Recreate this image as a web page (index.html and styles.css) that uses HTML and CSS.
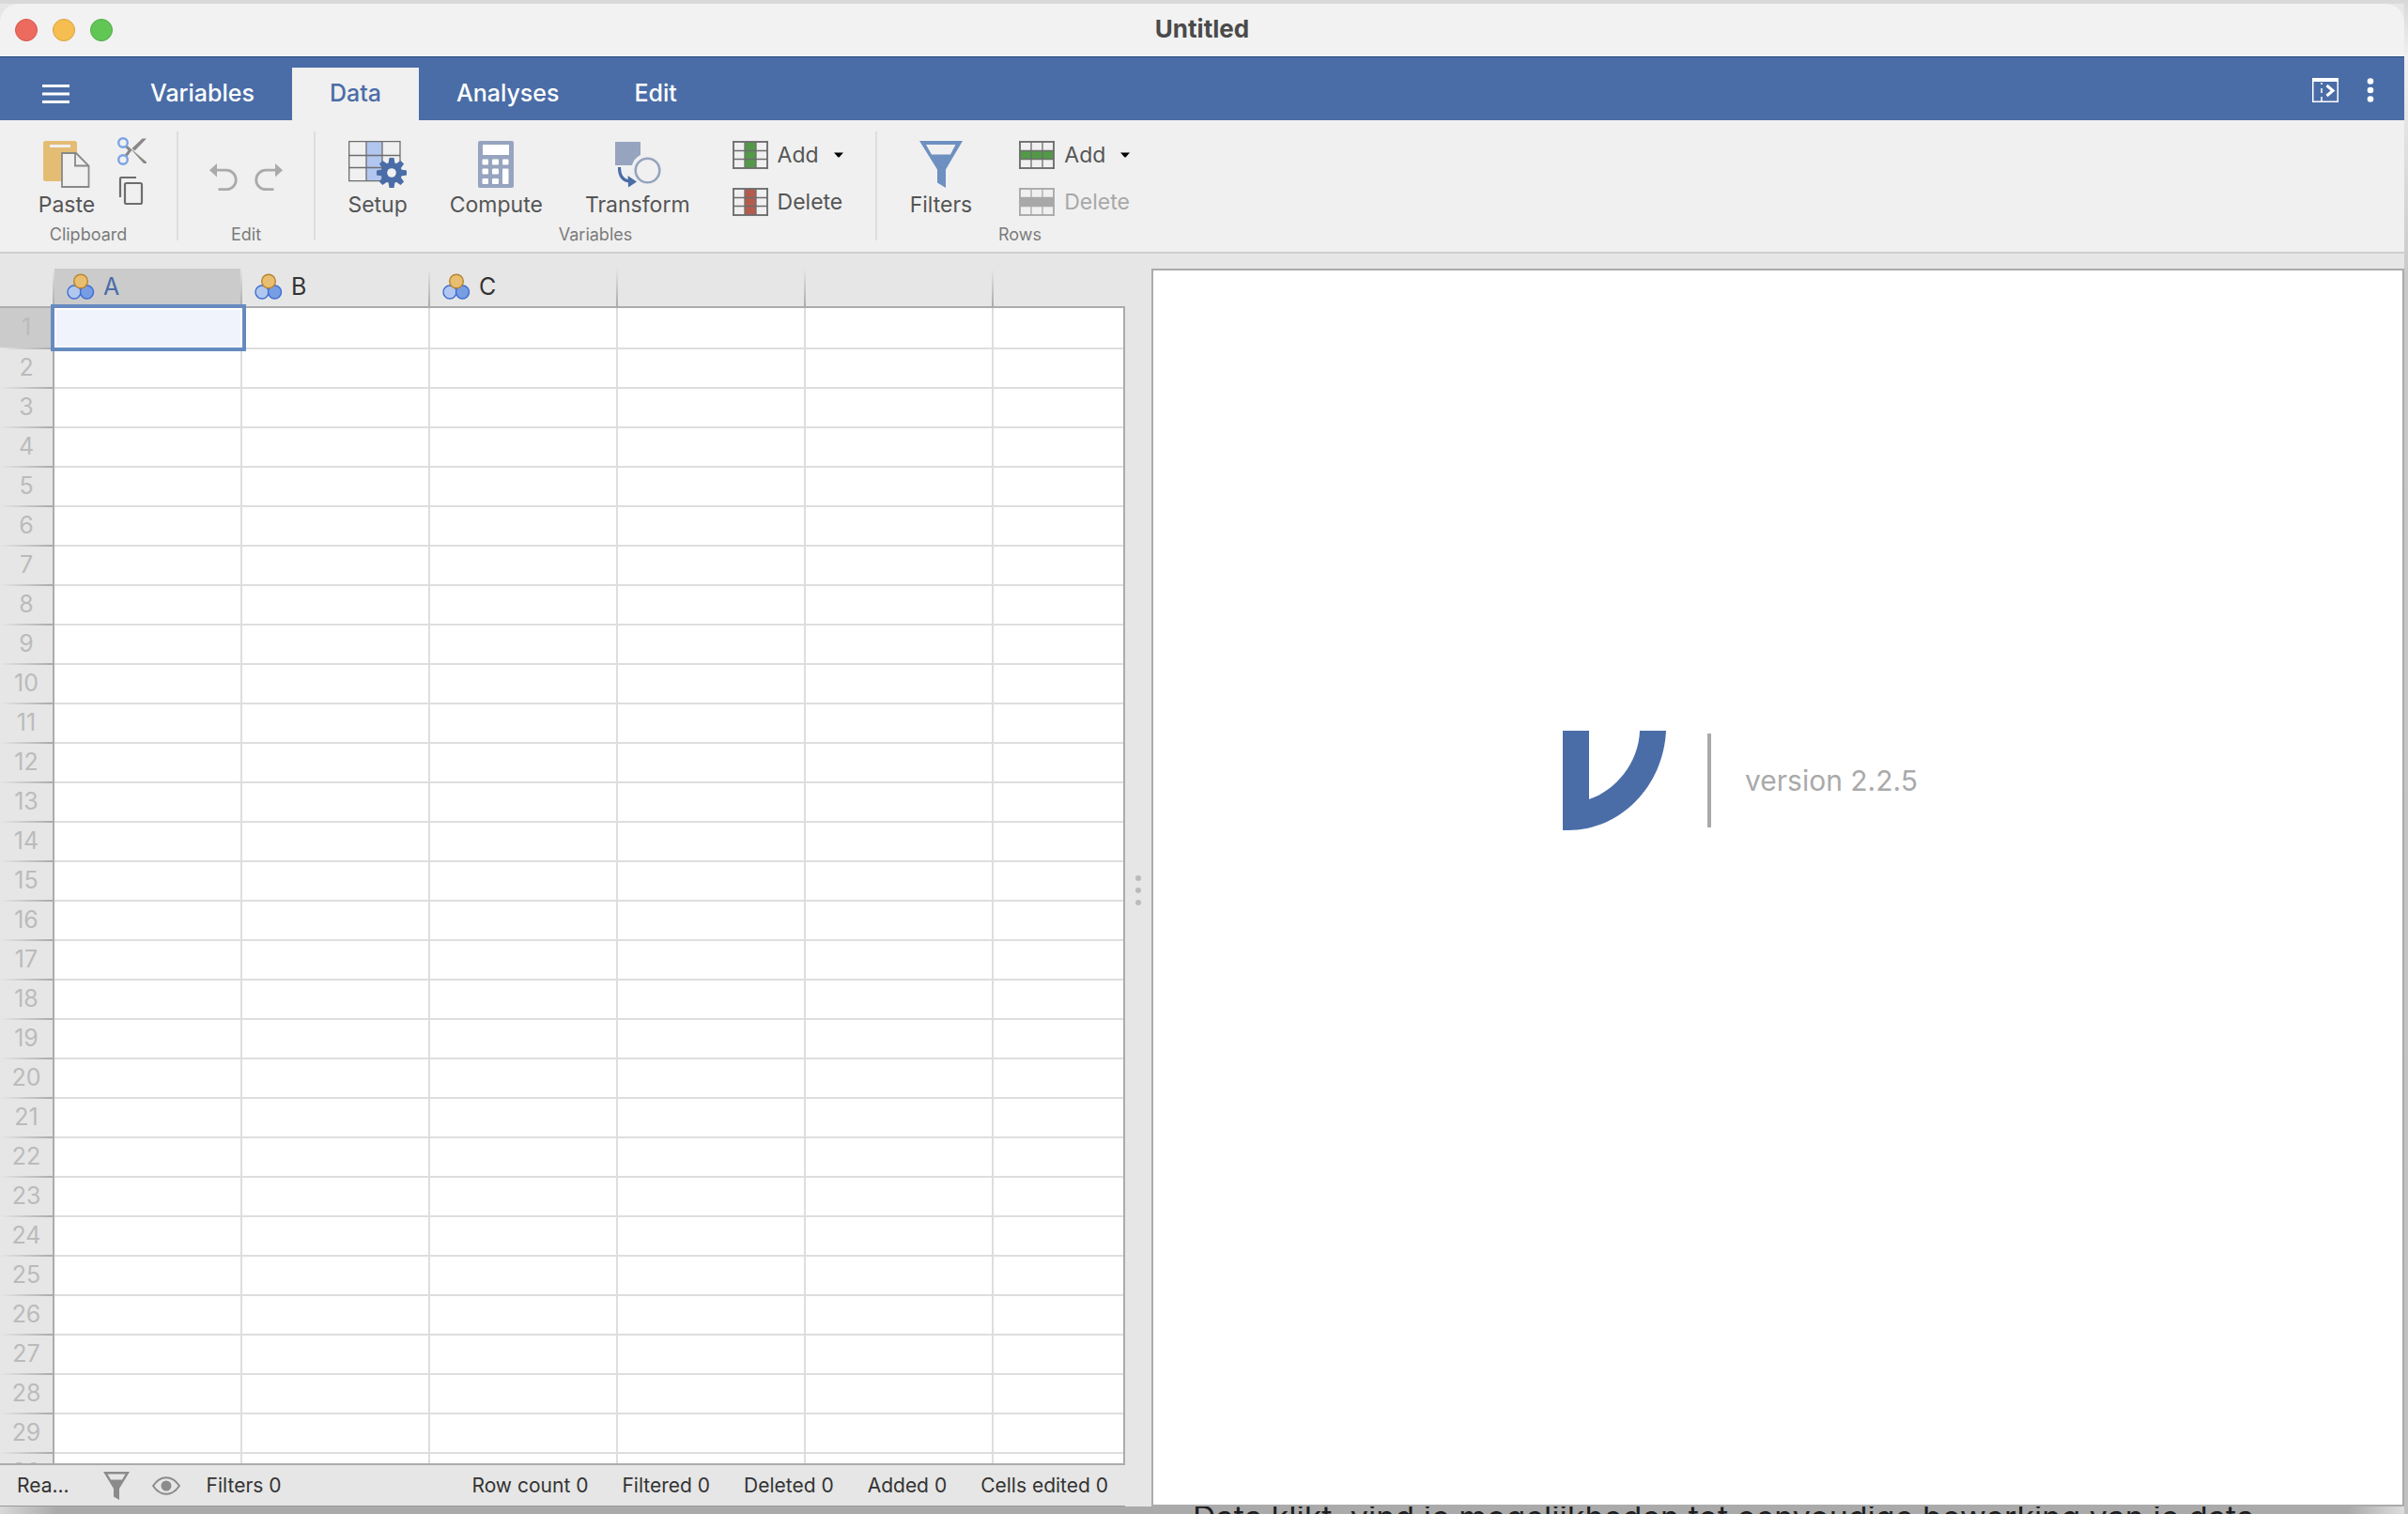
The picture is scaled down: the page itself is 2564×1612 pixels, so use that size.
FILE: index.html
```
<!DOCTYPE html>
<html lang="en">
<head>
    <meta charset="UTF-8">
    <meta name="viewport" content="width=device-width, initial-scale=1.0">
    <title>Untitled</title>
    <link rel="stylesheet" href="styles.css">
</head>
<body>
    <!-- shared icon shapes -->
    <svg class="defs" aria-hidden="true">
        <symbol id="icon-nominal" viewBox="0 0 30 30">
            <circle cx="8" cy="21" r="7" fill="#b1c7ef" stroke="#3e6dd2" stroke-width="1.4"/>
            <circle cx="21.500" cy="21" r="7" fill="#779de2" stroke="#3e6dd2" stroke-width="1.4"/>
            <circle cx="15" cy="9.500" r="7.300" fill="#e8bf70" stroke="#b88331" stroke-width="1.4"/>
        </symbol>
        <symbol id="icon-caret" viewBox="0 0 10 6">
            <path d="M0 0.500h10L5.500 5.500h-1z" fill="#000"/>
        </symbol>
        <symbol id="icon-grid" viewBox="0 0 38 30">
            <path d="M1 1h36v28H1zM13 1v28M25 1v28M1 10.500h36M1 19.500h36" fill="none" stroke="currentColor" stroke-width="1.300"/>
            <path d="M1 0v30M0 1h38M37 0v30M0 29h38" fill="none" stroke="currentColor" stroke-width="1.600"/>
        </symbol>
    </svg>

    <div class="window">
        <header class="titlebar">
            <div class="lights">
                <button class="light close" aria-label="Close"></button>
                <button class="light minimise" aria-label="Minimise"></button>
                <button class="light zoom" aria-label="Zoom"></button>
            </div>
            <h1>Untitled</h1>
        </header>

        <nav class="tabs">
            <button class="menu" aria-label="Menu">
                <svg width="30" height="20" viewBox="0 0 30 20"><path d="M0 1.500h29M0 10h29M0 18.500h29" stroke="#fff" stroke-width="3"/></svg>
            </button>
            <button class="tab">Variables</button>
            <button class="tab active">Data</button>
            <button class="tab">Analyses</button>
            <button class="tab">Edit</button>
            <div class="tools">
                <button class="tool" aria-label="Toggle results">
                    <svg width="28" height="26" viewBox="0 0 28 26">
                        <path d="M0.750 2v23.250h26.500V2" fill="none" stroke="#fff" stroke-width="1.500"/>
                        <path d="M0 0h28v4H0z" fill="#fff"/>
                        <path d="M10 5v2M10 11v5M10 20v5" stroke="#fff" stroke-width="1.500"/>
                        <path d="M15.500 8l6.500 5.500-6.500 5.500" fill="none" stroke="#fff" stroke-width="3"/>
                    </svg>
                </button>
                <button class="tool" aria-label="More">
                    <svg width="8" height="26" viewBox="0 0 8 26" fill="#fff"><circle cx="4" cy="3.500" r="3.300"/><circle cx="4" cy="13" r="3.300"/><circle cx="4" cy="22.500" r="3.300"/></svg>
                </button>
            </div>
        </nav>

        <div class="ribbon">
            <section class="group clipboard">
                <div class="items">
                    <button class="big">
                        <svg width="50" height="50" viewBox="0 0 50 50">
                            <rect width="36" height="43" rx="2.500" fill="#e4bd74"/>
                            <path d="M7 4h22v3H7z" fill="#f0f0f0"/>
                            <path d="M20 13h15l13.500 13.500V49H20z" fill="#f0f0f0" stroke="#888" stroke-width="1.800"/>
                            <path d="M34 13v13.500h14" fill="none" stroke="#888" stroke-width="1.800"/>
                        </svg>
                        <span>Paste</span>
                    </button>
                    <div class="stack small">
                        <button aria-label="Cut">
                            <svg width="32" height="30" viewBox="0 0 32 30">
                                <path d="M9 9.500L13.500 14 9 20" fill="none" stroke="#888" stroke-width="3"/>
                                <path d="M10 8L28 28h3V26.500L14 12zM15.500 12L26.500 1.500H31L18.500 14.500zM10 20.500l5-5.500" fill="#888"/>
                                <circle cx="6" cy="6" r="4.800" fill="#f0f0f0" stroke="#7aa3e5" stroke-width="2.400"/>
                                <circle cx="6" cy="24" r="4.800" fill="#f0f0f0" stroke="#7aa3e5" stroke-width="2.400"/>
                            </svg>
                        </button>
                        <button aria-label="Copy">
                            <svg width="32" height="30" viewBox="0 0 32 30" fill="none" stroke="#6d6d6d" stroke-width="2.200">
                                <rect x="8" y="7" width="18" height="22" rx="1.500"/>
                                <path d="M3 22V2.500Q3 1 4.500 1H20"/>
                            </svg>
                        </button>
                    </div>
                </div>
                <h2>Clipboard</h2>
            </section>

            <section class="group edit">
                <div class="items">
                    <button aria-label="Undo">
                        <svg width="30" height="30" viewBox="0 0 30 30"><path d="M6 7.200h12a10 10 0 0 1 0 20.500h-8.500" fill="none" stroke="#aaa" stroke-width="2.800"/><path d="M0 7.200L8 0v14.400z" fill="#aaa"/></svg>
                    </button>
                    <button aria-label="Redo">
                        <svg width="30" height="30" viewBox="0 0 30 30"><path d="M24 7.200H12a10 10 0 0 0 0 20.500h8.500" fill="none" stroke="#aaa" stroke-width="2.800"/><path d="M30 7.200L22 0v14.400z" fill="#aaa"/></svg>
                    </button>
                </div>
                <h2>Edit</h2>
            </section>

            <section class="group variables">
                <div class="items">
                    <button class="big">
                        <svg width="62" height="50" viewBox="0 0 62 50">
                            <path d="M19 1h17v42H19z" fill="#b1c7ef"/>
                            <path d="M0.700 0.700h54.300v42H0.700zM19 1v42M36 1v42M0 15.500h55M0 28.500h55" fill="none" stroke="#6d6d6d" stroke-width="1.300"/>
                            <g fill="#4a6da7">
                                <circle cx="46" cy="34" r="11"/>
                                <path d="M43.500 18h5l1 6h-7zM43.500 50h5l1-6h-7zM30 31.500v5l6 1v-7zM62 31.500v5l-6 1v-7z"/>
                                <path d="M43.500 18h5l1 6h-7zM43.500 50h5l1-6h-7zM30 31.500v5l6 1v-7zM62 31.500v5l-6 1v-7z" transform="rotate(45 46 34)"/>
                            </g>
                            <circle cx="46" cy="34" r="4.800" fill="#f0f0f0"/>
                        </svg>
                        <span>Setup</span>
                    </button>
                    <button class="big">
                        <svg width="38" height="50" viewBox="0 0 38 50">
                            <rect width="38" height="50" rx="2" fill="#96a4bf"/>
                            <g fill="#fff">
                                <path d="M5 4h28v11H5z"/>
                                <rect x="4.500" y="19.500" width="6.500" height="6" rx="1"/><rect x="15" y="19.500" width="7" height="6" rx="1"/><rect x="26" y="19.500" width="6.500" height="6" rx="1"/>
                                <rect x="4.500" y="29.500" width="6.500" height="6" rx="1"/><rect x="15" y="29.500" width="7" height="6" rx="1"/><rect x="26" y="29.500" width="6.500" height="16.500" rx="1"/>
                                <rect x="4.500" y="40" width="6.500" height="6" rx="1"/><rect x="15" y="40" width="7" height="6" rx="1"/>
                            </g>
                        </svg>
                        <span>Compute</span>
                    </button>
                    <button class="big">
                        <svg width="50" height="50" viewBox="0 0 50 50">
                            <path d="M1 1h27v14a18 18 0 0 0-9 11H1z" fill="#96a4bf"/>
                            <circle cx="35.500" cy="31.500" r="12.800" fill="none" stroke="#96a4bf" stroke-width="2.600"/>
                            <path d="M5.500 28q0 14 11 15" fill="none" stroke="#4a6da7" stroke-width="3.200"/>
                            <path d="M14.500 37L24 43.500 15 49.500z" fill="#4a6da7"/>
                        </svg>
                        <span>Transform</span>
                    </button>
                    <div class="stack">
                        <button class="row">
                            <svg class="grid-icon" width="38" height="30" viewBox="0 0 38 30"><path d="M13 1h12v28H13z" fill="#529a47"/><use href="#icon-grid"/></svg>
                            <span>Add</span>
                            <svg class="caret" width="10" height="6"><use href="#icon-caret"/></svg>
                        </button>
                        <button class="row">
                            <svg class="grid-icon" width="38" height="30" viewBox="0 0 38 30"><path d="M13 1h12v28H13z" fill="#b55b4e"/><use href="#icon-grid"/></svg>
                            <span>Delete</span>
                        </button>
                    </div>
                </div>
                <h2>Variables</h2>
            </section>

            <section class="group rows">
                <div class="items">
                    <button class="big">
                        <svg width="46" height="50" viewBox="0 0 46 50"><path fill-rule="evenodd" d="M0 0h46L28 30.500V50l-9-5.500v-14zM7 4l6 10.500h20L38.500 4z" fill="#6e90c1"/></svg>
                        <span>Filters</span>
                    </button>
                    <div class="stack">
                        <button class="row">
                            <svg class="grid-icon" width="38" height="30" viewBox="0 0 38 30"><path d="M1 11h36v8.500H1z" fill="#529a47"/><use href="#icon-grid"/></svg>
                            <span>Add</span>
                            <svg class="caret" width="10" height="6"><use href="#icon-caret"/></svg>
                        </button>
                        <button class="row" disabled>
                            <svg class="grid-icon" width="38" height="30" viewBox="0 0 38 30"><path d="M1 10.500h36v9H1z" fill="#a8a8a8"/><use href="#icon-grid"/></svg>
                            <span>Delete</span>
                        </button>
                    </div>
                </div>
                <h2>Rows</h2>
            </section>
        </div>

        <main>
            <div class="data-panel">
                <div class="sheet">
                    <div class="cells">
                        <table>
                            <thead>
                                <tr>
                                    <th class="corner"></th>
                                    <th class="selected"><div><svg width="30" height="30"><use href="#icon-nominal"/></svg>A</div></th>
                                    <th><div><svg width="30" height="30"><use href="#icon-nominal"/></svg>B</div></th>
                                    <th><div><svg width="30" height="30"><use href="#icon-nominal"/></svg>C</div></th>
                                    <th></th>
                                    <th></th>
                                    <th></th>
                                </tr>
                            </thead>
                            <tbody id="rows"></tbody>
                        </table>
                    </div>
                </div>
                <footer class="status">
                    <span class="state">Rea...</span>
                    <svg width="28" height="30" viewBox="0 0 28 30"><path fill-rule="evenodd" d="M0 0h28L17 18v12l-6-3.500V18zM4.500 2.500L8 8.500h12l3.500-6z" fill="#8b8b8b"/></svg>
                    <svg class="eye" width="30" height="20" viewBox="0 0 30 20"><path d="M1 10Q7 1.200 15 1.200T29 10Q23 18.800 15 18.800T1 10z" fill="none" stroke="#8b8b8b" stroke-width="2"/><circle cx="15" cy="10" r="5.500" fill="#8b8b8b"/></svg>
                    <span class="filters">Filters 0</span>
                    <span>Row count 0</span>
                    <span>Filtered 0</span>
                    <span>Deleted 0</span>
                    <span>Added 0</span>
                    <span>Cells edited 0</span>
                </footer>
            </div>
            <div class="splitter"><i></i><i></i><i></i></div>
            <div class="results">
                <div class="brand">
                    <svg width="110" height="106" viewBox="0 0 110 106"><path d="M0 0h28v73C56 64 81 34 82 0h28C107 60 61 106 6 106H0z" fill="#4a6da7"/></svg>
                    <p>version 2.2.5</p>
                </div>
            </div>
        </main>
    </div>

    <div class="behind"><p>Data klikt, vind je mogelijkheden tot eenvoudige bewerking van je data</p></div>

    <script>
        // build the empty rows of the sheet
        const rows = document.getElementById('rows');
        for (let i = 1; i <= 30; i++) {
            const tr = rows.insertRow();
            const th = document.createElement('th');
            th.textContent = i;
            tr.appendChild(th);
            for (let j = 0; j < 6; j++) {
                tr.insertCell();
            }
        }
        rows.rows[0].cells[0].className = 'selected';
        rows.rows[0].cells[1].className = 'selected';
    </script>
</body>
</html>
```
FILE: styles.css
```
* {
    margin: 0;
    padding: 0;
    box-sizing: border-box;
}

body {
    display: flex;
    flex-direction: column;
    height: 100vh;
    padding: 4px 4px 0 0;
    overflow: hidden;
    font-family: Inter, "Liberation Sans", sans-serif;
    font-size: 23px;
    line-height: 28px;
    color: #333;
    background: linear-gradient(#d8d8d8, #f0f0f0 60px, #c8c8c8 300px, #c0c0c0);
}

button {
    border: none;
    background: none;
    font: inherit;
    color: inherit;
}

svg {
    display: block;
    flex-shrink: 0;
}

.defs {
    position: absolute;
    width: 0;
    height: 0;
}

.window {
    display: flex;
    flex: 1;
    flex-direction: column;
    min-height: 0;
    background: #e6e6e6;
}

/* title bar */
.titlebar {
    display: grid;
    grid-template-columns: 1fr auto 1fr;
    align-items: center;
    height: 56px;
    padding: 0 16px;
    background: #f2f2f2;
    border-radius: 20px 20px 0 0;
}

.lights {
    display: flex;
    gap: 16px;
}

.light {
    width: 24px;
    height: 24px;
    border: 1px solid;
    border-radius: 50%;
}

.close {
    background: #ed6a5f;
    border-color: #d9564c;
}

.minimise {
    background: #f6be50;
    border-color: #d9a13c;
}

.zoom {
    background: #62c655;
    border-color: #4fab43;
}

.titlebar h1 {
    padding-bottom: 2px;
    font-size: 26px;
    font-weight: 700;
    color: #4a4a4a;
}

/* tabs */
.tabs {
    display: flex;
    align-items: flex-end;
    height: 68px;
    background: #4a6da7;
    border-top: 1px solid #274a80;
    color: #fff;
}

.menu {
    display: flex;
    align-items: center;
    justify-content: center;
    width: 120px;
    height: 56px;
}

.tab {
    height: 56px;
    padding: 0 40px 2px;
    font-size: 25px;
    font-weight: 500;
}

.tab.active {
    background: #f0f0f0;
    color: #4a6da7;
}

.tools {
    display: flex;
    gap: 30px;
    align-items: center;
    height: 64px;
    margin-left: auto;
    padding-right: 32px;
}

/* ribbon */
.ribbon {
    display: flex;
    height: 142px;
    padding: 12px 0;
    background: #f0f0f0;
    border-bottom: 2px solid #cfcfcf;
    color: #555;
}

.group {
    height: 116px;
    padding-top: 10px;
    border-right: 2px solid #dedede;
}

.group:last-child {
    width: 304px;
    border-right: none;
}

.group h2 {
    font-size: 18px;
    font-weight: 400;
    line-height: 24px;
    text-align: center;
    color: #7b7b7b;
}

.items {
    display: flex;
    justify-content: center;
    height: 88px;
}

.clipboard {
    width: 190px;
}

.clipboard .items {
    gap: 24px;
    padding-left: 10px;
}

.edit {
    width: 146px;
}

.edit .items {
    gap: 18px;
    padding-bottom: 10px;
}

.variables {
    width: 598px;
}

.variables .items {
    gap: 45px;
}

.rows .items {
    gap: 50px;
}

.big {
    display: flex;
    flex-direction: column;
    align-items: center;
    gap: 4px;
}

.stack {
    display: flex;
    flex-direction: column;
    gap: 20px;
}

.stack.small {
    gap: 12px;
    margin-top: -4px;
}

.row {
    display: flex;
    align-items: center;
    gap: 10px;
    height: 30px;
}

.grid-icon {
    color: #6d6d6d;
}

.caret {
    margin-left: 6px;
}

.row:disabled,
.row:disabled .grid-icon {
    color: #a8a8a8;
}

/* main area */
main {
    display: grid;
    flex: 1;
    grid-template-columns: 1198fr 28px 1334fr;
    min-height: 0;
    padding-top: 16px;
}

.data-panel {
    display: flex;
    flex-direction: column;
    min-width: 0;
    min-height: 0;
}

/* the right edge starts below the column headers */
.sheet {
    flex: 1;
    min-height: 0;
    padding-right: 2px;
    border-bottom: 2px solid #ababab;
    background: linear-gradient(#e6e6e6 40px, #ababab 40px);
}

.cells {
    height: 100%;
    overflow: hidden;
}

.cells table {
    width: 1258px;
    table-layout: fixed;
    border-spacing: 0;
}

.cells th {
    font-size: 25px;
    font-weight: 400;
}

.cells thead th {
    width: 200px;
    height: 42px;
    border-bottom: 2px solid #ababab;
    background: linear-gradient(#e6e6e6, #ababab) right / 2px 100% no-repeat #e6e6e6;
}

.cells thead .corner {
    width: 58px;
}

.cells thead .selected {
    background-color: #cbcbcb;
    color: #4a6da7;
}

.cells th div {
    display: flex;
    align-items: center;
    gap: 9px;
    height: 40px;
    padding: 0 0 2px 13px;
}

.cells td {
    height: 42px;
    background: #fff;
    border-right: 2px solid #dedede;
    border-bottom: 2px solid #dedede;
}

.cells tbody th {
    padding-bottom: 4px;
    background: linear-gradient(90deg, #e6e6e6, #ababab) bottom / 100% 2px no-repeat #e6e6e6;
    border-right: 2px solid #ababab;
    color: #bbb;
}

.cells tbody tr:first-child td {
    height: 44px;
}

.cells tbody .selected {
    background-color: #cbcbcb;
}

.cells td.selected {
    position: relative;
    background: #fff;
}

/* cell cursor, drawn over the grid lines */
.cells td.selected::after {
    content: "";
    position: absolute;
    inset: -4px -6px -4px -4px;
    padding: 2px;
    background: #f0f3fb content-box;
    border: 4px solid #678bc0;
    box-shadow: inset 0 0 0 2px #fff;
}

/* status bar */
.status {
    display: flex;
    align-items: center;
    height: 44px;
    padding: 0 18px;
    gap: 36px;
    font-size: 21px;
    border-bottom: 1px solid #999;
    white-space: nowrap;
}

.eye {
    margin-left: -12px;
}

.filters {
    margin-left: -8px;
    margin-right: auto;
}

.splitter {
    display: flex;
    flex-direction: column;
    align-items: center;
    justify-content: center;
    gap: 7px;
    padding-top: 6px;
}

.splitter i {
    width: 6px;
    height: 6px;
    border-radius: 50%;
    background: #bbb;
}

/* results */
.results {
    display: flex;
    flex-direction: column;
    align-items: center;
    background: #fff;
    border: 2px solid #ababab;
}

/* sits a little above the middle of the panel */
.results::before {
    content: "";
    flex: 41;
}

.results::after {
    content: "";
    flex: 60;
}

.brand {
    display: flex;
    align-items: center;
    gap: 44px;
    margin-right: 80px;
}

.brand p {
    padding-left: 36px;
    border-left: 4px solid #aaa;
    font-size: 30px;
    line-height: 100px;
    color: #aaa;
}

/* strip of the document behind the window */
.behind {
    height: 8px;
    overflow: hidden;
    padding-left: 1270px;
    background: linear-gradient(90deg, #d8d8d8, #aaa 60px, #aaa 2500px, #ddd);
}

.behind p {
    font-size: 34px;
    line-height: 24px;
    white-space: nowrap;
    color: #1d1d1f;
}
```
